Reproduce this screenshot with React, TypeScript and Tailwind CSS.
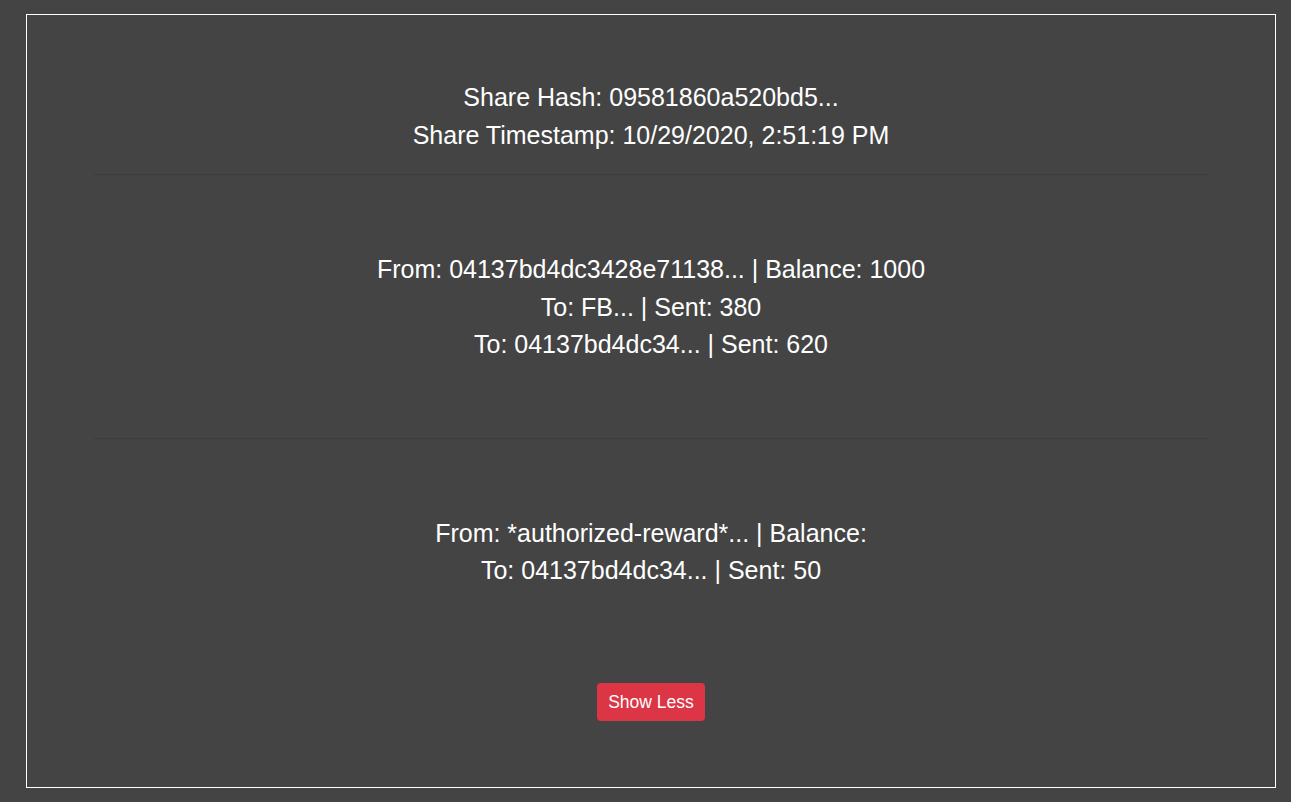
export default function App() {
  const font = { fontFamily: '"Liberation Sans", Arial, sans-serif' };
  return (
    <div className="w-[1291px] h-[802px] bg-[#444444] pt-[14px] pl-[26px]" style={font}>
      <div className="w-[1250px] h-[774px] border border-white px-[67px] flex flex-col items-stretch text-white text-center">
        <div className="pt-[64px] text-[25px] leading-[37.5px]">
          <div>Share Hash: 09581860a520bd5...</div>
          <div>Share Timestamp: 10/29/2020, 2:51:19 PM</div>
        </div>
        <div className="mt-[20px] h-px bg-[#3c3c3c]" />
        <div className="pt-[76px] pb-[74px] text-[25px] leading-[37.5px]">
          <div>From: 04137bd4dc3428e71138... | Balance: 1000</div>
          <div>To: FB... | Sent: 380</div>
          <div>To: 04137bd4dc34... | Sent: 620</div>
        </div>
        <div className="h-px bg-[#3c3c3c]" />
        <div className="pt-[76px] text-[25px] leading-[37.5px]">
          <div>From: *authorized-reward*... | Balance:</div>
          <div>To: 04137bd4dc34... | Sent: 50</div>
        </div>
        <div className="flex justify-center mt-[93px]">
          <button className="w-[108px] h-[38px] rounded-[4px] bg-[#dc3545] text-white text-[17.5px] leading-[38px]">
            Show Less
          </button>
        </div>
      </div>
    </div>
  );
}
